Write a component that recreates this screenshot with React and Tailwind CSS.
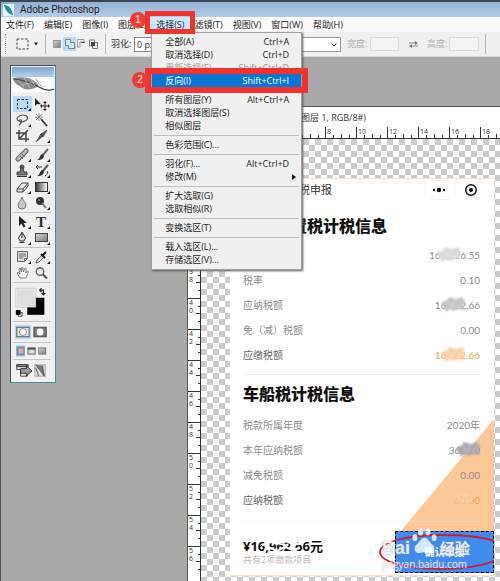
import { useState } from "react"

const menus = ["文件(F)", "编辑(E)", "图像(I)", "图层(L)", "选择(S)", "滤镜(T)", "视图(V)", "窗口(W)", "帮助(H)"]

const selectMenu = [
  [
    { label: "全部(A)", keys: "Ctrl+A" },
    { label: "取消选择(D)", keys: "Ctrl+D" },
    { label: "重新选择(E)", keys: "Shift+Ctrl+D", disabled: true },
    { label: "反向(I)", keys: "Shift+Ctrl+I" },
  ],
  [
    { label: "所有图层(Y)", keys: "Alt+Ctrl+A" },
    { label: "取消选择图层(S)" },
    { label: "相似图层" },
  ],
  [{ label: "色彩范围(C)..." }],
  [{ label: "羽化(F)...", keys: "Alt+Ctrl+D" }, { label: "修改(M)", sub: true }],
  [{ label: "扩大选取(G)" }, { label: "选取相似(R)" }],
  [{ label: "变换选区(T)" }],
  [{ label: "载入选区(L)..." }, { label: "存储选区(V)..." }],
]

const Badge = ({ children, className }) => (
  <span className={`absolute flex size-4 items-center justify-center rounded-full bg-[#ee3b33] font-['Liberation_Sans',sans-serif] text-[10px] leading-none text-white ${className}`}>
    {children}
  </span>
)

const SelectMenu = ({ active, setActive }) => (
  <div className="absolute top-full left-0 z-20 w-[151px] border border-[#a0a0a0] bg-[#f0f0f0] pt-[2px] pb-[3px] shadow-[1px_1px_2px_#555]">
    {selectMenu.map((group, i) => (
      <div key={i}>
        {i > 0 && <hr className="mx-[2px] mt-[3px] mb-[2px] border-[#bdbdbd]" />}
        {group.map((item) => (
          <div key={item.label} className="relative">
            <button
              type="button"
              disabled={item.disabled}
              onClick={() => setActive(item.label)}
              className={`flex h-[13px] w-full items-center justify-between pr-[12px] pl-[13px] text-[9px] leading-[13px] whitespace-nowrap ${active === item.label ? "bg-[#0a76d4] text-white" : item.disabled ? "text-[#9a9a9a]" : "text-[#222]"}`}
            >
              <span>{item.label}</span>
              <span>{item.keys}</span>
              {item.sub && (
                <svg viewBox="0 0 4 6" className="-mr-[7px] h-[6px] w-[4px]"><path d="M0 0L4 3L0 6z" fill="#111" /></svg>
              )}
            </button>
            {item.label === "反向(I)" && (
              <>
                <span className="pointer-events-none absolute -inset-x-[7px] -inset-y-[6px] z-10 border-6 border-[#f3322d]" />
                <Badge className="-left-[20px] -top-[2px] z-20">2</Badge>
              </>
            )}
          </div>
        ))}
      </div>
    ))}
  </div>
)

const MenuBar = ({ active, setActive }) => (
  <nav className="flex h-[15px] bg-[#fbfbfb]">
    {menus.map((m) => (
      <div key={m} className="relative">
        <button
          type="button"
          className={`block h-[15px] px-[5px] text-left text-[9px] leading-[14px] whitespace-nowrap text-[#222] ${m === "选择(S)" ? "bg-[#cce8ff]" : ""}`}
        >
          {m}
        </button>
        {m === "选择(S)" && (
          <>
            <SelectMenu active={active} setActive={setActive} />
            <span className="pointer-events-none absolute -inset-x-[6px] -top-[6px] -bottom-[2px] z-30 border-5 border-[#f3322d]" />
            <Badge className="-left-[21px] -top-[5px] z-30">1</Badge>
          </>
        )}
      </div>
    ))}
  </nav>
)

const Divider = () => <span className="h-[20px] w-px bg-[#b5b5b5]" />

const OptionsBar = () => (
  <div className="flex h-[25px] items-center border-b border-[#d8d8d8] bg-[#f0f0f0] text-[9px] text-[#333]">
    <span className="ml-[4px] h-[20px] border-l border-dotted border-[#999]" />
    <svg viewBox="0 0 22 12" className="ml-[10px] h-[12px] w-[22px]">
      <rect x="1" y="1" width="11" height="10" fill="none" stroke="#444" strokeDasharray="2.5 1.5" />
      <path d="M18 4.5h4l-2 3z" fill="#222" />
    </svg>
    <span className="ml-[7px] flex"><Divider /></span>
    <svg viewBox="0 0 48 14" className="ml-[5px] h-[14px] w-[48px]">
      <defs>
        <linearGradient id="sq" x2="1" y2="1"><stop stopColor="#d8d8d8" /><stop offset="1" stopColor="#777" /></linearGradient>
        <linearGradient id="grad"><stop stopColor="#333" /><stop offset="1" stopColor="#fff" /></linearGradient>
      </defs>
      <rect x="2.5" y="3.5" width="7" height="7" fill="url(#sq)" stroke="#999" />
      <rect x="12" width="13" height="14" fill="#b9dcf6" />
      <path d="M14.500 2.500h5v3h4v6h-6v-3h-3z" fill="#dfe6ec" stroke="#718596" />
      <path d="M26.500 10V2.500H33V5h-4v5z" fill="#eee" stroke="#999" />
      <path d="M30 5.500h4" stroke="#555" />
      <path d="M38.500 3h5v2.500h3v6h-5V9h-3z" fill="#eee" stroke="#777" />
      <rect x="40" y="5" width="4" height="4" fill="#444" />
    </svg>
    <span className="ml-[6px] flex"><Divider /></span>
    <label htmlFor="feather" className="ml-[5px] w-[23px]">羽化:</label>
    <input id="feather" defaultValue="0 px" className="h-[15px] w-[40px] border border-[#8a8a8a] bg-white px-[2px] text-[9px]" />
    <label htmlFor="mode" className="ml-[60px] w-[24px]">样式:</label>
    <div className="relative">
      <select id="mode" className="block h-[15px] w-[83px] appearance-none border border-[#999] bg-white px-1 text-[9px]">
        <option>正常</option>
      </select>
      <svg viewBox="0 0 6 4" className="pointer-events-none absolute top-[6px] right-[4px] h-[4px] w-[6px]"><path d="M.5.500L3 3L5.500.500" fill="none" stroke="#444" /></svg>
    </div>
    <label htmlFor="w" className="ml-[6px] w-[23px] text-[#b0b0b0]">宽度:</label>
    <input id="w" disabled className="h-[14px] w-[29px] border border-[#dadada] bg-[#f3f3f3]" />
    <svg viewBox="0 0 9 7" className="ml-[10px] h-[7px] w-[9px]">
      <path d="M0 2h7M9 5H2" stroke="#888" /><path d="M6 0l3 2l-3 2zM3 3L0 5l3 2z" fill="#777" />
    </svg>
    <label htmlFor="h" className="ml-[9px] w-[22px] text-[#b0b0b0]">高度:</label>
    <input id="h" disabled className="h-[14px] w-[30px] border border-[#dadada] bg-[#f3f3f3]" />
    <span className="ml-[6px] flex"><Divider /></span>
  </div>
)

// every tool is drawn on a 16x14 grid
const tools = [
  [
    ["选框", <rect x="2.500" y="2.500" width="10" height="9" fill="none" stroke="#234" strokeDasharray="2.500 1.500" />, true],
    ["移动", <g><path d="M1 1v8l2-2l4 .3z" fill="#222" /><path d="M11 5v8M7 9h8" stroke="#222" /><path d="M11 4l2 2H9zM11 14l2-2H9zM6 9l2-2v4zM16 9l-2-2v4z" fill="#222" /></g>],
    ["套索", <path d="M4 8C0 6 3 2 8 2s6 4 2 6s-7 0-5-1s2 3-1 5" fill="none" stroke="#555" strokeWidth="1.200" />, true],
    ["魔棒", <g><path d="M7 6l6 7" stroke="#333" strokeWidth="1.800" /><path d="M5 0v8M1 4h8M2 1l6 6M8 1L2 7" stroke="#777" strokeWidth=".8" /></g>],
    ["裁剪", <g><path d="M4 1v9h10M1 4h10v9M5 9l8-8" fill="none" stroke="#444" strokeWidth="1.500" /></g>],
    ["切片", <path d="M2 13l5-8l2 2zM7 5l6-4l-4 7z" fill="#555" stroke="#333" strokeWidth=".6" />, true],
  ],
  [
    ["修复", <g><path d="M3 11L11 3" stroke="#666" strokeWidth="5" strokeLinecap="round" /><path d="M3 11L11 3" stroke="#bbb" strokeWidth="3" strokeLinecap="round" /><path d="M5 8l3 3M7 6l3 3" stroke="#555" strokeWidth=".8" /></g>, true],
    ["画笔", <g><path d="M14 1L8 8" stroke="#666" strokeWidth="2" /><path d="M8 6l2 2c-1 4-4 4-7 4c3-1 2-4 5-6z" fill="#333" /></g>, true],
    ["图章", <g><circle cx="7" cy="3" r="2.500" fill="#555" /><path d="M6 4h2l1 4h3v3H2V8h3z" fill="#777" stroke="#444" /><path d="M2 12.500h10" stroke="#333" /></g>, true],
    ["历史画笔", <g><path d="M14 1L8 8" stroke="#555" strokeWidth="2" /><path d="M8 6l2 2c-1 4-4 4-7 4c3-1 2-4 5-6z" fill="#333" /><path d="M2 3h6M2 3l2-2M2 3l2 2M11 12c3-2 3-4 2-5" fill="none" stroke="#333" /></g>, true],
    ["橡皮", <path d="M2 9l5-6h6l-5 6zM2 9v3h6V9M8 12l5-6V3" fill="#eee" stroke="#444" />, true],
    ["渐变", <rect x="1.500" y="2.500" width="12" height="9" fill="url(#grad)" stroke="#333" />, true],
    ["模糊", <path d="M7 1c1 4 4 5 4 8a4 4 0 0 1-8 0c0-3 3-4 4-8z" fill="#c8c8c8" stroke="#777" />],
    ["减淡", <g><circle cx="6" cy="5" r="4" fill="#333" /><path d="M8 7l4 5" stroke="#777" strokeWidth="2" /><circle cx="5" cy="4" r="1" fill="#888" /></g>, true],
  ],
  [
    ["路径选择", <path d="M4 1v10l2.500-2.500l2 4l2-1l-2-3.500H12z" fill="#222" />, true],
    ["文字", <text x="2" y="12" fontFamily="Liberation Serif" fontWeight="bold" fontSize="15" fill="#333">T</text>, true],
    ["钢笔", <path d="M7 1l3.500 6L9 10H5L3.500 7zM7 2v5M4.500 11.500h5" fill="#ddd" stroke="#333" />, true],
    ["矩形", <rect x="1.500" y="2.500" width="12" height="8" fill="url(#sq)" stroke="#444" />, true],
  ],
  [
    ["注释", <g><path d="M2.500 1.500h10v7l-3 3h-7z" fill="#ddd" stroke="#666" /><path d="M4 4h7M4 6h7M4 8h4M9.500 11.500v-3h3" stroke="#666" fill="none" /></g>, true],
    ["吸管", <g><path d="M2 13l1-3l5-5l2 2l-5 5z" fill="#ddd" stroke="#555" strokeWidth=".8" /><path d="M7 4l4 4M9 5l3-3" stroke="#222" strokeWidth="2.200" /></g>, true],
    ["抓手", <path d="M5 12L2 7l1-1l2 2L4 3l1-1l1.500 4V1.500h1.300L8.500 6L10 2l1.200.5L10.800 7L12.500 5l1 .5L11 12z" fill="#fafafa" stroke="#777" strokeWidth=".9" />],
    ["缩放", <g><circle cx="6" cy="5.500" r="3.800" fill="#eee" stroke="#666" strokeWidth="1.400" /><path d="M9 8.500l4 4" stroke="#555" strokeWidth="2.200" /></g>],
  ],
]

const ToolBox = () => {
  const [tool, setTool] = useState("选框")
  return (
    <aside className="mt-[8px] ml-[9px] w-[46px] shrink-0 border border-[#45505a] border-r-[#3f8fa3] border-b-[#3f8fa3] bg-[#f0f0f0] p-px">
      <div className="h-[10px] bg-linear-to-b from-[#7fa6d3] to-[#b5cfe9]" />
      <svg viewBox="0 0 42 15" className="h-[15px] w-full bg-white" preserveAspectRatio="none">
        <path d="M0 1C10-1 22 0 27 9C20 13 12 14 8 9C5 8 2 5 0 1z" fill="#8b8b8b" />
        <path d="M2 2C12 3 20 6 27 10S38 14 42 12" fill="none" stroke="#444" strokeWidth="1.200" />
        <path d="M6 3l6 7M12 1l6 10M18 1l5 8M9 8l14-3" stroke="#bbb" strokeWidth=".8" />
        <path d="M24 2c2 3 3 5 6 8" fill="none" stroke="#999" />
      </svg>
      <div className="pt-[3px] pr-[3px] pl-px">
        {tools.map((group, i) => (
          <div key={i} className="grid grid-cols-2 border-b border-[#c4c4c4] py-px">
            {group.map(([name, icon, more]) => (
              <button
                key={name}
                type="button"
                aria-label={name}
                onClick={() => setTool(name)}
                className={`flex h-[16px] items-center justify-center ${tool === name ? "bg-[#b9dcf6]" : ""}`}
              >
                <svg viewBox="0 0 16 14" className="h-[14px] w-[16px]">
                  {icon}
                  {more && <path d="M16 11v3h-3z" fill="#111" />}
                </svg>
              </button>
            ))}
          </div>
        ))}
        <svg viewBox="0 0 40 39" className="h-[39px] w-full border-b border-[#c4c4c4]">
          <path d="M15 15h18v18H15z" fill="#000" />
          <rect x="3.500" y="5.500" width="20" height="19" fill="#dedede" stroke="#fff" />
          <path d="M3 5h21v20H3z" fill="none" stroke="#999" strokeWidth=".5" />
          <path d="M28 7h4v5M30 5l-2 2l2 2M30 10l2 2l2-2" fill="none" stroke="#222" strokeWidth="1.200" />
          <rect x="5.500" y="30.500" width="4" height="4" fill="#fff" stroke="#444" />
          <rect x="3" y="28" width="5" height="5" fill="#000" />
        </svg>
        <svg viewBox="0 0 40 21" className="h-[21px] w-full border-b border-[#c4c4c4]">
          <path d="M2 3h17v15H2z" fill="#b9dcf6" />
          <rect x="4" y="5.500" width="13" height="10" fill="#e3e3e3" stroke="#555" />
          <circle cx="10.500" cy="10.500" r="3.700" fill="#fff" stroke="#888" />
          <rect x="22" y="5.500" width="13" height="10" fill="#777" stroke="#444" />
          <circle cx="28.500" cy="10.500" r="3.600" fill="#fff" />
        </svg>
        <svg viewBox="0 0 40 18" className="h-[17px] w-full border-b border-[#c4c4c4]">
          <path d="M2 3h10v12H2z" fill="#7db4e6" />
          <rect x="4" y="5.500" width="7" height="7" fill="#e7a795" stroke="#5878a0" />
          <rect x="15.500" y="5.500" width="8" height="7" fill="#ddd" stroke="#555" /><path d="M15 6.500h9" stroke="#555" strokeWidth="2" />
          <rect x="27.500" y="5.500" width="8" height="7" fill="url(#sq)" stroke="#777" />
        </svg>
        <svg viewBox="0 0 40 20" className="h-[21px] w-full">
          <path d="M4 4h11v12H8V9H4z" fill="#eee" stroke="#444" />
          <path d="M4 4h12v2H4zM8 8h6V5l6 5.500l-6 5V13H8z" fill="#999" stroke="#333" />
          <rect x="23" y="4" width="11" height="12" fill="#ddd" stroke="#aaa" />
          <path d="M24 4l9 12l-2-11M27 16l-3-9" fill="#777" stroke="#555" />
        </svg>
      </div>
    </aside>
  )
}

const topRuler = [0, 2, 4, 6, 8, 10, 12, 14, 16, 18]
const sideRuler = [30, 32, 34, 36, 38, 40, 42, 44, 46, 48, 50, 52, 54, 56]

const TopRuler = () => (
  <div className="flex h-[12px] overflow-hidden border-b border-[#333] pl-[13px]">
    {topRuler.map((n) => (
      <div key={n} className="relative h-full w-[31px] shrink-0 border-l border-[#333] pl-px text-[7px] leading-[9px] text-[#333]">
        {n}
        <svg viewBox="0 0 31 12" className="absolute bottom-0 left-0 h-[12px] w-[31px]">
          <path d="M7.500 9v3M15.500 8v4M23.500 9v3" stroke="#333" />
        </svg>
      </div>
    ))}
  </div>
)

const SideRuler = () => (
  <div className="w-[13px] shrink-0 overflow-hidden border-r border-[#333] bg-white pt-[4px]">
    {sideRuler.map((n) => (
      <div key={n} className="relative h-[31px] border-t border-[#333] pl-px text-[7px] leading-[8px] text-[#333]">
        {String(n).split("").map((d, i) => <div key={i}>{d}</div>)}
        <svg viewBox="0 0 12 31" className="absolute top-0 right-0 h-[31px] w-[12px]">
          <path d="M10 7.500h2M8 14.500h4M10 22.500h2" stroke="#333" />
        </svg>
      </div>
    ))}
  </div>
)

const Smudge = ({ color, className }) => (
  <svg viewBox="0 0 28 18" className={`absolute -top-[2px] h-[18px] w-[28px] blur-[1px] ${className}`}>
    <path d="M1 7l6-3l2-3l7 2l6-2l3 4l-2 6l2 3l-7-1l-4 2l-4-2l-4 3l-2-4z" fill={color} />
    <path d="M7 5l5 6l4-8M17 12l5-7" fill="none" stroke="#fff" strokeOpacity=".25" strokeWidth="2" />
  </svg>
)

const Row = ({ label, value, smudge, strong, at = "right-[12px]" }) => (
  <div className={`relative flex h-[25px] items-center justify-between text-[10px] ${strong ? "text-[#666]" : "text-[#8d8d8d]"}`}>
    <span>{label}</span>
    <span className={`relative font-['Lato','Noto_Sans_CJK_SC',sans-serif] ${strong ? "text-[#e9a445]" : ""}`}>
      {value}
      {smudge && <Smudge color={smudge} className={at} />}
    </span>
  </div>
)

const Watermark = () => (
  <div className="pointer-events-none absolute -top-[3px] -left-[13px] w-[88px] text-white/80 [text-shadow:0_0_2px_#999]">
    <svg viewBox="0 0 26 28" className="absolute top-0 left-[29px] size-[27px]">
      <g fill="#fff" fillOpacity=".8">
        <ellipse cx="3" cy="10" rx="2.600" ry="3.500" /><ellipse cx="9" cy="4" rx="2.800" ry="3.800" />
        <ellipse cx="16.500" cy="4" rx="2.800" ry="3.800" /><ellipse cx="23" cy="10" rx="2.600" ry="3.500" />
        <path d="M13 10c4 0 5 5 9 8c3 4 0 9-4 8c-3-1-7-1-10 0c-4 1-7-4-4-8c4-3 5-8 9-8z" />
      </g>
    </svg>
    <div className="flex h-[30px] items-end justify-between font-bold">
      <span className="font-['Liberation_Sans',sans-serif] text-[18px] leading-[20px]">Bai</span>
      <span className="text-[15px] leading-[20px]">经验</span>
    </div>
    <div className="font-['Open_Sans',sans-serif] text-[10px] leading-[12px]">jingyan.baidu.com</div>
  </div>
)

const Paper = () => (
  <section className="relative mt-[39px] mr-[6px] ml-[29px] flex-1 border-t border-b border-[#fbe3c2] bg-white pr-[14px] pl-[13px]">
    <header className="flex h-[22px] items-center justify-between text-[11px] text-[#333]">
      <span className="w-[89px] text-right">车辆购置税申报</span>
      <svg viewBox="0 0 62 20" className="-mr-[6px] h-[20px] w-[62px]">
        <rect x=".5" y=".5" width="31" height="19" rx="3" fill="none" stroke="#f4f4f4" />
        <circle cx="10" cy="10" r="1.200" /><circle cx="15" cy="10" r="2.200" /><circle cx="20" cy="10" r="1.200" />
        <circle cx="47" cy="10" r="5.300" fill="none" stroke="#111" strokeWidth="1.500" /><circle cx="47" cy="10" r="2.100" />
      </svg>
    </header>
    <h2 className="mt-[12px] h-[26px] text-[16px] leading-[26px] font-black text-[#111]">车辆购置税计税信息</h2>
    <div className="mt-[4px] border-b border-[#ececec] pb-[6px]">
      <Row label="计税价格" value="169,026.55" smudge="#d9d9d9" at="right-[16px]" />
      <Row label="税率" value="0.10" />
      <Row label="应纳税额" value="16,902.66" smudge="#c3c3c6" />
      <Row label="免（减）税额" value="0.00" />
      <Row label="应缴税额" value="16,902.66" smudge="#f8cfa5" strong />
    </div>
    <svg viewBox="0 0 94 113" className="absolute right-0 bottom-[43px] h-[113px] w-[94px]"><path d="M94 0v113H0z" fill="#fdc897" /></svg>
    <h2 className="relative mt-[6px] h-[26px] text-[16px] leading-[26px] font-black text-[#111]">车船税计税信息</h2>
    <div className="relative mt-[6px] border-b border-[#ececec]/60 pb-[8px]">
      <Row label="税款所属年度" value="2020年" />
      <Row label="本年应纳税额" value="360.00" smudge="#a9a6ae" at="right-[-3px]" />
      <Row label="减免税额" value="0.00" />
      <Row label="应纳税额" value="60.00" smudge="#fdc89799" at="right-[2px]" strong />
    </div>
    <footer className="relative mt-[9px] -mr-[14px] flex h-[44px] justify-between">
      <div className="pt-[7px]">
        <div className="relative text-[13px] leading-[16px] font-bold text-[#111]">
          ¥16,962.66元
          <svg viewBox="0 0 78 16" className="absolute top-0 left-0 h-[16px] w-[78px]">
            <path d="M19 7l8-3l7 2l9-3l8 4l9-3M21 12l7-2l6 3l8-4l8 3l7-2" fill="none" stroke="#fff" strokeWidth="2" />
          </svg>
        </div>
        <div className="text-[9px] leading-[12px] text-[#bbb]">共有2项缴款项目</div>
      </div>
      <div className="relative">
        <button type="button" className="block h-[42px] w-[99px] border border-dashed border-black bg-[#3f8bf0] text-[10px] font-bold text-white">
          确认申报
        </button>
        <svg viewBox="0 0 115 38" className="absolute top-[2px] right-0 h-[38px] w-[115px]">
          <path d="M115 8C100 3 82 2 62 2C28 2 1 9 1 19S28 36 60 36C82 36 102 33 115 28" fill="none" stroke="#c91f35" strokeWidth="1.800" />
        </svg>
        <Watermark />
      </div>
    </footer>
  </section>
)

export default function App() {
  const [active, setActive] = useState("反向(I)")

  return (
    <div className="flex min-h-screen flex-col overflow-hidden border-t-2 border-l border-[#50545c] border-t-[#3f4250] bg-[#a9a9a9] font-['Open_Sans','Noto_Sans_CJK_SC',sans-serif]">
      <div className="flex h-[15px] items-center gap-[6px] bg-linear-to-b from-[#92b2d6] to-[#b3cde8] pl-[2px] text-[10px] text-[#222]">
        <svg viewBox="0 0 11 12" className="h-[12px] w-[11px]">
          <rect width="11" height="12" fill="#e8f3fa" />
          <path d="M1 1c5 0 8 4 9 10C5 10 2 6 1 1z" fill="#1a8fc9" /><path d="M1 1c3 2 6 5 9 10l-4-3z" fill="#2c9a4b" />
        </svg>
        <h1 className="font-['Roboto',sans-serif]">Adobe Photoshop</h1>
      </div>
      <MenuBar active={active} setActive={setActive} />
      <OptionsBar />
      <div className="flex flex-1 items-stretch">
        <div><ToolBox /></div>
        <main className="mt-[49px] ml-[131px] flex min-w-0 flex-1 flex-col border-t border-l border-[#555] bg-white">
          <div className="h-[20px] w-[178px] text-right text-[9px] leading-[22px] whitespace-nowrap text-[#333]">
            未标题-1 @ 100% (图层 1, RGB/8#)
          </div>
          <TopRuler />
          <div className="flex flex-1">
            <SideRuler />
            <div className="flex min-w-0 flex-1 flex-col bg-[conic-gradient(#ccc_25%,#fff_0_50%,#ccc_0_75%,#fff_0)] bg-[length:12px_12px] pb-[5px]">
              <Paper />
            </div>
          </div>
        </main>
      </div>
    </div>
  )
}
